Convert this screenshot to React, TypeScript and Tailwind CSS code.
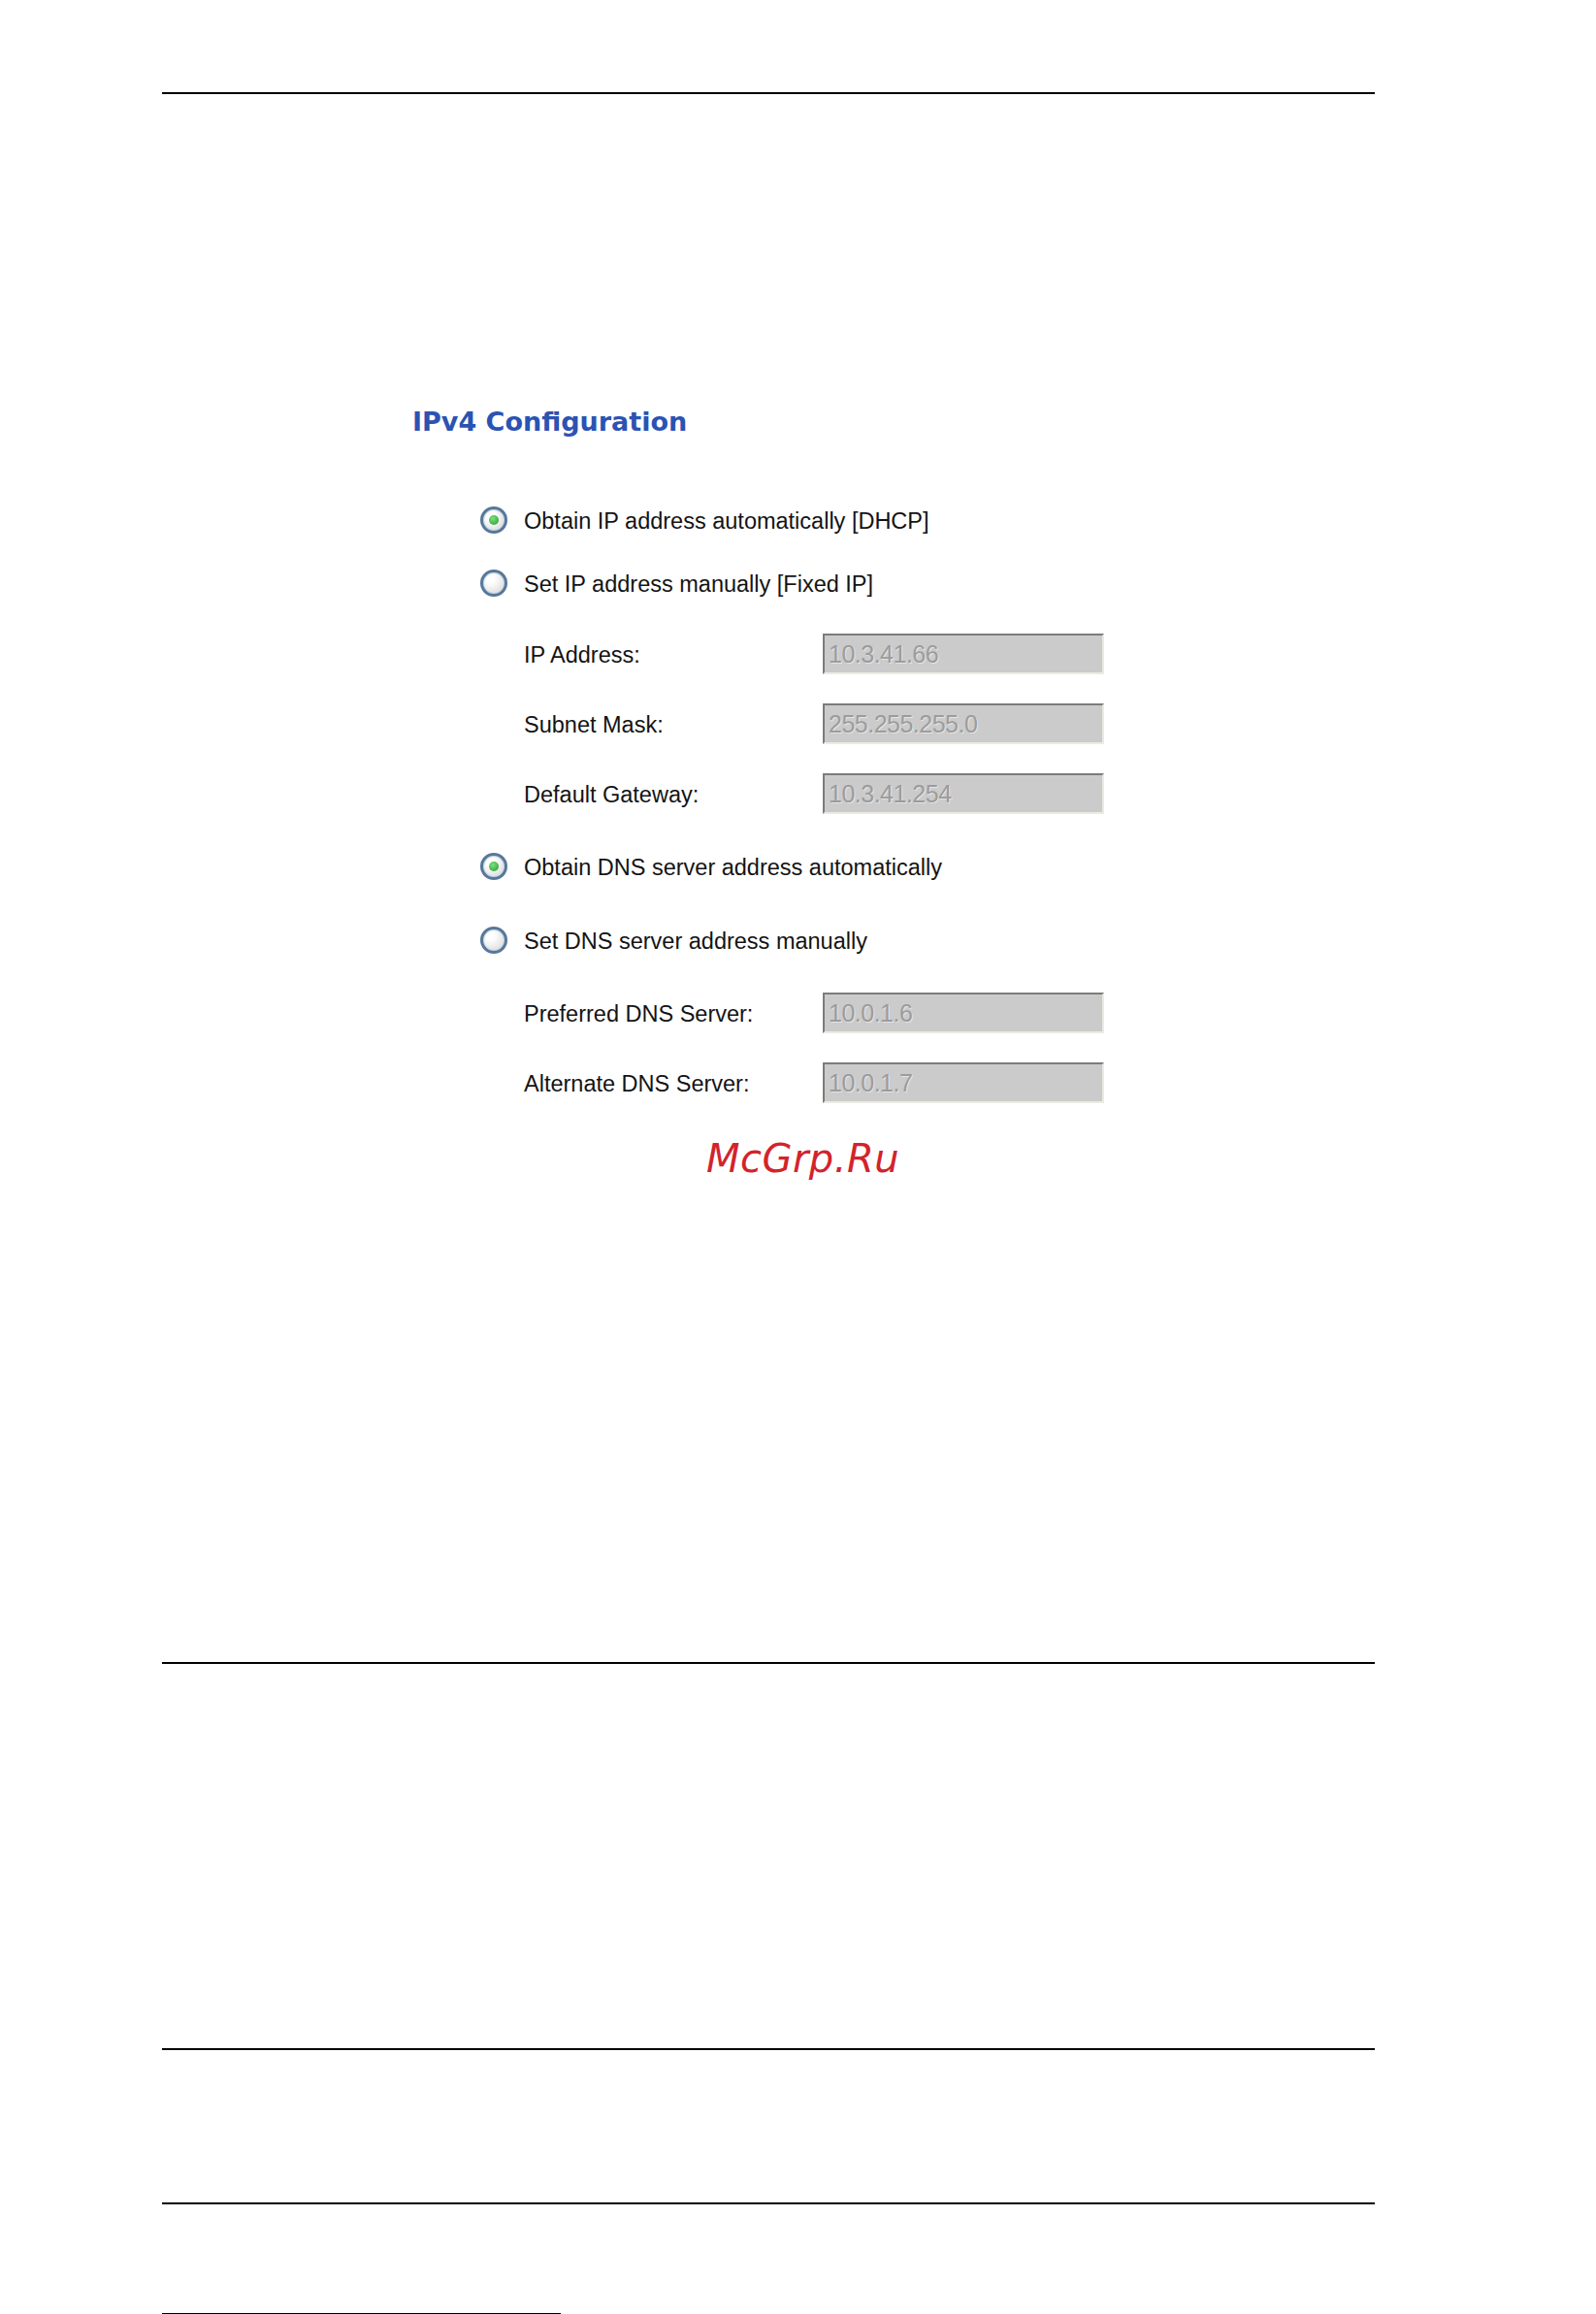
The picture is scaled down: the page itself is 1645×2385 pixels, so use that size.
// IPv4 network settings page: DHCP / fixed-IP radios, address fields and DNS servers.
// Fields are disabled while "automatic" is chosen, so they render as grey inset boxes.

interface FieldView {
  key: string;
  label: string;
  value: string;
}

const ipFields: FieldView[] = [
  { key: "ip", label: "IP Address:", value: "10.3.41.66" },
  { key: "mask", label: "Subnet Mask:", value: "255.255.255.0" },
  { key: "gw", label: "Default Gateway:", value: "10.3.41.254" },
];

const dnsFields: FieldView[] = [
  { key: "dns1", label: "Preferred DNS Server:", value: "10.0.1.6" },
  { key: "dns2", label: "Alternate DNS Server:", value: "10.0.1.7" },
];

function Rule({ className = "" }: { className?: string }) {
  return <div className={`ml-[167px] h-[2px] w-[1250px] bg-black ${className}`} />;
}

function Radio({ checked }: { checked?: boolean }) {
  return (
    <span className="flex h-[28px] w-[28px] shrink-0 items-center justify-center rounded-full border-[3px] border-[#56789b] bg-[radial-gradient(circle_at_35%_30%,#ffffff_20%,#d2d2d2)] shadow-[inset_0_0_0_1px_#c9d6e2]">
      {checked && (
        <span className="h-[10px] w-[10px] rounded-full bg-[radial-gradient(circle_at_40%_35%,#7fe07f,#1d9a2a)]" />
      )}
    </span>
  );
}

function RadioRow({
  label,
  checked,
  className = "",
}: {
  label: string;
  checked?: boolean;
  className?: string;
}) {
  return (
    <div className={`flex h-[30px] items-center gap-[17px] ${className}`}>
      <Radio checked={checked} />
      <span className="whitespace-nowrap pt-[3px] text-[23.5px] leading-none text-[#141414]">
        {label}
      </span>
    </div>
  );
}

function FieldRows({ fields, className = "" }: { fields: FieldView[]; className?: string }) {
  return (
    <div className={`flex flex-col gap-[30px] pl-[45px] ${className}`}>
      {fields.map((f) => (
        <div key={f.key} className="flex h-[42px] items-center">
          <span className="w-[308px] shrink-0 whitespace-nowrap pt-[4px] text-[23.5px] leading-none text-[#141414]">
            {f.label}
          </span>
          <input
            disabled
            value={f.value}
            readOnly
            className="h-[42px] w-[290px] border-[2px] border-t-[#7c7c7c] border-l-[#7c7c7c] border-r-[#ecebe2] border-b-[#ecebe2] bg-[#cbcbcb] px-[4px] text-[25px] tracking-[-0.5px] text-[#9c9c9c] [text-shadow:1px_1px_0_#e4e4e4] outline-none"
          />
        </div>
      ))}
    </div>
  );
}

export default function App() {
  return (
    <div className="relative h-[2385px] w-[1645px] overflow-hidden bg-white font-['Liberation_Sans',Arial,sans-serif]">
      <div className="h-[95px]" />
      <Rule />

      <h2 className="ml-[425px] mt-[322px] h-[32px] font-['DejaVu_Sans',Verdana,sans-serif] text-[27px] font-bold leading-[32px] text-[#2b53b3]">
        IPv4 Configuration
      </h2>

      <div className="ml-[495px]">
        <RadioRow label="Obtain IP address automatically [DHCP]" checked className="mt-[70px]" />
        <RadioRow label="Set IP address manually [Fixed IP]" className="mt-[35px]" />
        <FieldRows fields={ipFields} className="mt-[37px]" />
        <RadioRow label="Obtain DNS server address automatically" checked className="mt-[39px]" />
        <RadioRow label="Set DNS server address manually" className="mt-[46px]" />
        <FieldRows fields={dnsFields} className="mt-[39px]" />
      </div>

      <p className="mt-[33px] h-[48px] pl-[10px] text-center font-['DejaVu_Sans',sans-serif] text-[40px] italic leading-[48px] tracking-[0.5px] text-[#d3232b]">
        McGrp.Ru
      </p>

      <Rule className="mt-[495px]" />
      <Rule className="mt-[396px]" />
      <Rule className="mt-[157px]" />

      <div className="ml-[167px] mt-[112px] h-[2px] w-[411px] bg-black" />
    </div>
  );
}
